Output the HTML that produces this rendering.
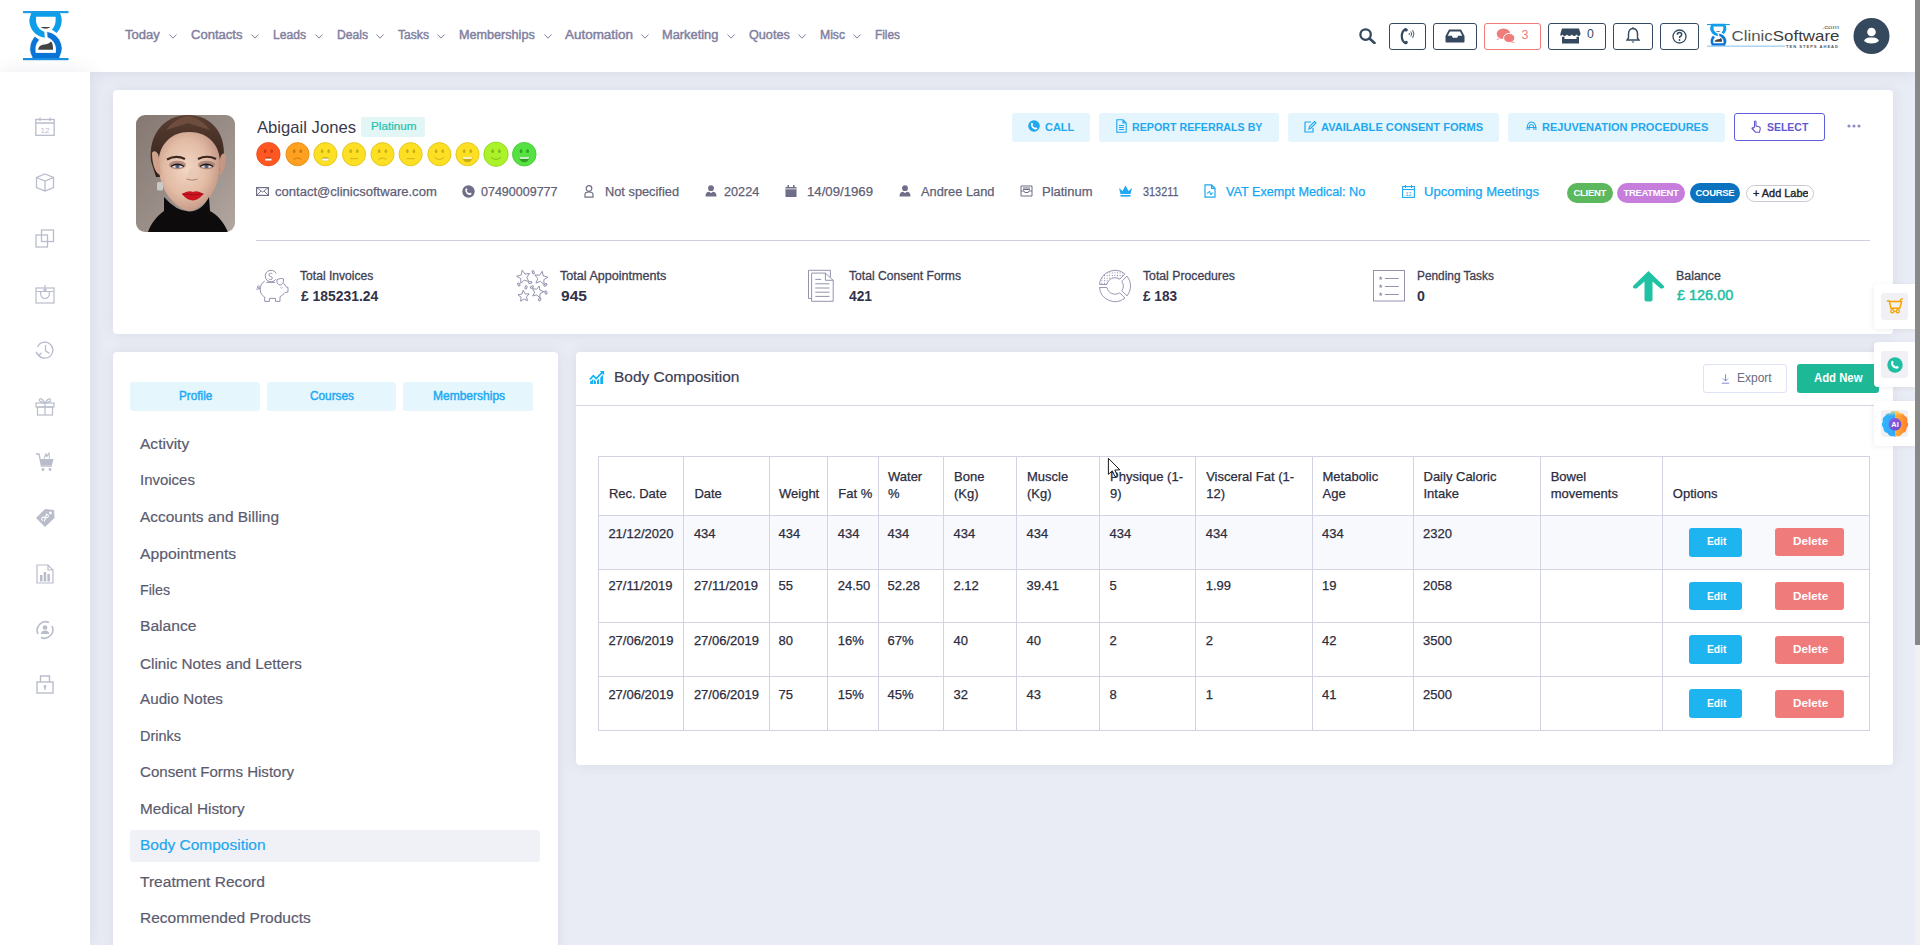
<!DOCTYPE html>
<html><head><meta charset="utf-8">
<style>
*{margin:0;padding:0;box-sizing:border-box;}
html,body{width:1920px;height:945px;overflow:hidden;}
body{background:#e9ecf4;font-family:"Liberation Sans",sans-serif;position:relative;color:#3b3b4f;}
.a{position:absolute;}
.t{position:absolute;white-space:pre;transform-origin:0 0;}
.bx{position:absolute;}
#hdr{position:absolute;left:0;top:0;width:1915px;height:72px;background:#fff;box-shadow:0 0 14px rgba(70,70,120,0.10);}
#side{position:absolute;left:0;top:72px;width:90px;height:873px;background:#fff;box-shadow:0 0 18px rgba(70,70,120,0.10);}
#sb{position:absolute;left:1915px;top:0;width:5px;height:945px;background:#f1f1f1;}
#sbt{position:absolute;left:1915px;top:0;width:5px;height:645px;background:#888;}
.card{position:absolute;background:#fff;border-radius:4px;box-shadow:0 0 14px rgba(70,70,120,0.09);}
.hb{position:absolute;top:23px;height:27px;border:1px solid #34495e;border-radius:3px;}
.ab{position:absolute;top:113px;height:29px;background:#e4f5fd;border-radius:3px;}
.tab{position:absolute;top:382px;height:29px;background:#e6f6fd;border-radius:3px;}
.hl{position:absolute;background:#d3d4e2;height:1px;}
.vl{position:absolute;background:#d3d4e2;width:1px;}
.pill{position:absolute;top:183px;height:20px;border-radius:10px;color:#fff;font-size:9.5px;font-weight:bold;line-height:20px;text-align:center;letter-spacing:-0.3px;}
.btn{position:absolute;height:29px;border-radius:3px;}
.wg{position:absolute;left:1874px;width:41px;height:45px;background:#fff;border-radius:4px 0 0 4px;box-shadow:-1px 1px 4px rgba(120,120,160,0.12);}
.wgi{position:absolute;left:7px;top:9px;width:27px;height:27px;background:#f1f1f5;border-radius:3px;}
.si{position:absolute;left:35px;width:20px;height:20px;}
</style></head>
<body>
<div id="hdr"></div>
<div id="side"></div>

<!-- cards -->
<div class="card" style="left:113px;top:90px;width:1780px;height:244px;"></div>
<div class="card" style="left:113px;top:352px;width:445px;height:620px;"></div>
<div class="card" style="left:576px;top:352px;width:1317px;height:413px;"></div>

<!-- logo -->
<svg class="a" style="left:23px;top:11px" width="46" height="50" viewBox="0 0 46 50">
  <path d="M8.8 -0.5 L36.4 -0.5 L36.6 1.5 C38 4 38.9 7 38.7 10 C38.5 15 36.5 19 33.6 22 L28.9 18.4 C31.5 15.5 32.8 12.5 32.6 9 L32.6 5.7 L13 5.7 L13 10 C13.5 15 16.5 19 21.3 20.7 L21.8 26.7 C13 25.5 7 19 6.3 10 C6.5 6.5 7.5 4 8.6 1.5 Z" fill="#0d9de9"/>
  <path d="M8.8 -0.5 L36.4 -0.5 L36.6 1.5 C38 4 38.9 7 38.7 10 C38.5 15 36.5 19 33.6 22 L28.9 18.4 C31.5 15.5 32.8 12.5 32.6 9 L32.6 5.7 L13 5.7 L13 10 C13.5 15 16.5 19 21.3 20.7 L21.8 26.7 C13 25.5 7 19 6.3 10 C6.5 6.5 7.5 4 8.6 1.5 Z" fill="#0a74d6" stroke="#fff" stroke-width="0.8" transform="rotate(180 22.75 23.6)"/>
  <rect x="0" y="0" width="45.5" height="2.2" fill="#1b9ce8"/>
  <rect x="0" y="47" width="45.5" height="2.2" fill="#1a8fe0"/>
  <path d="M17.4 15.9 Q22.5 19.5 27.6 15.9 Z" fill="#444"/>
  <path d="M15.2 38.8 C15.5 35 18 33.8 23 33.2 C26 32.8 27 31.5 27.8 30.5 C29.5 31.5 30.1 34.5 30.1 38.8 Z" fill="#444"/>
</svg>

<svg class="a" style="left:169.0px;top:34px" width="8" height="5" viewBox="0 0 8 5"><path d="M0.5 0.5 L4 4.2 L7.5 0.5" fill="none" stroke="#8280a0" stroke-width="1"/></svg>
<svg class="a" style="left:251.0px;top:34px" width="8" height="5" viewBox="0 0 8 5"><path d="M0.5 0.5 L4 4.2 L7.5 0.5" fill="none" stroke="#8280a0" stroke-width="1"/></svg>
<svg class="a" style="left:315.0px;top:34px" width="8" height="5" viewBox="0 0 8 5"><path d="M0.5 0.5 L4 4.2 L7.5 0.5" fill="none" stroke="#8280a0" stroke-width="1"/></svg>
<svg class="a" style="left:376.0px;top:34px" width="8" height="5" viewBox="0 0 8 5"><path d="M0.5 0.5 L4 4.2 L7.5 0.5" fill="none" stroke="#8280a0" stroke-width="1"/></svg>
<svg class="a" style="left:437.0px;top:34px" width="8" height="5" viewBox="0 0 8 5"><path d="M0.5 0.5 L4 4.2 L7.5 0.5" fill="none" stroke="#8280a0" stroke-width="1"/></svg>
<svg class="a" style="left:543.8px;top:34px" width="8" height="5" viewBox="0 0 8 5"><path d="M0.5 0.5 L4 4.2 L7.5 0.5" fill="none" stroke="#8280a0" stroke-width="1"/></svg>
<svg class="a" style="left:640.6px;top:34px" width="8" height="5" viewBox="0 0 8 5"><path d="M0.5 0.5 L4 4.2 L7.5 0.5" fill="none" stroke="#8280a0" stroke-width="1"/></svg>
<svg class="a" style="left:727.0px;top:34px" width="8" height="5" viewBox="0 0 8 5"><path d="M0.5 0.5 L4 4.2 L7.5 0.5" fill="none" stroke="#8280a0" stroke-width="1"/></svg>
<svg class="a" style="left:798.0px;top:34px" width="8" height="5" viewBox="0 0 8 5"><path d="M0.5 0.5 L4 4.2 L7.5 0.5" fill="none" stroke="#8280a0" stroke-width="1"/></svg>
<svg class="a" style="left:853.0px;top:34px" width="8" height="5" viewBox="0 0 8 5"><path d="M0.5 0.5 L4 4.2 L7.5 0.5" fill="none" stroke="#8280a0" stroke-width="1"/></svg>

<!-- header right -->
<svg class="a" style="left:1359px;top:28px" width="17" height="16" viewBox="0 0 17 16"><circle cx="6.6" cy="6.6" r="5.2" fill="none" stroke="#34495e" stroke-width="2.3"/><path d="M10.5 10.5 L15.5 15" stroke="#34495e" stroke-width="2.6" stroke-linecap="round"/></svg>
<div class="hb" style="left:1389px;width:37px;"></div>
<svg class="a" style="left:1400px;top:27px" width="16" height="18" viewBox="0 0 16 18"><path d="M5.5 2.2 Q1.8 4 1.8 9.2 Q1.8 14.2 5.5 16.2" fill="none" stroke="#34495e" stroke-width="2.2"/><ellipse cx="6" cy="2.8" rx="1.9" ry="1.6" fill="#34495e" transform="rotate(30 6 2.8)"/><ellipse cx="6" cy="15.6" rx="1.9" ry="1.6" fill="#34495e" transform="rotate(-30 6 15.6)"/><path d="M9 6 Q10 7 9 8 M10.8 4.5 Q12.5 7 10.8 9.5 M12.6 3 Q15.2 7 12.6 11" fill="none" stroke="#34495e" stroke-width="0.9"/></svg>
<div class="hb" style="left:1433px;width:44px;"></div>
<svg class="a" style="left:1445px;top:29px" width="20" height="14" viewBox="0 0 20 14"><path d="M4 0.5 L16 0.5 L19.5 7 L19.5 12.5 Q19.5 13.5 18.5 13.5 L1.5 13.5 Q0.5 13.5 0.5 12.5 L0.5 7 Z" fill="#34495e"/><path d="M5 2.5 L15 2.5 L17.3 6.8 L13.2 6.8 L12.2 8.8 L7.8 8.8 L6.8 6.8 L2.7 6.8 Z" fill="#fff"/></svg>
<div class="hb" style="left:1484px;width:57px;border-color:#f07c7c;"></div>
<svg class="a" style="left:1496px;top:28px" width="20" height="16" viewBox="0 0 20 16"><ellipse cx="7.5" cy="5.8" rx="6.8" ry="5.3" fill="#f07c7c"/><path d="M1.5 10.5 L0.5 12 L4 10.8 Z" fill="#f07c7c"/><ellipse cx="13.2" cy="10" rx="5.6" ry="4.6" fill="#f07c7c" stroke="#fff" stroke-width="1"/><path d="M17 13.5 L18.8 15 L15 14.3 Z" fill="#f07c7c"/></svg>
<div class="t" style="left:1521.5px;top:28.5px;font-size:12.5px;line-height:13px;color:#f07c7c;">3</div>
<div class="hb" style="left:1548px;width:58px;"></div>
<svg class="a" style="left:1560px;top:28px" width="21" height="16" viewBox="0 0 21 16"><path d="M2 0.5 L19 0.5 L20.5 5.5 Q20.5 8 18.7 8 Q17 8 16.6 6.6 Q16 8 14.2 8 Q12.4 8 11.8 6.6 Q11.2 8 9.4 8 Q7.6 8 7 6.6 Q6.4 8 4.6 8 Q2.8 8 2.3 6.6 Q1.8 8 0.5 7.5 Q0 6 0.5 5.5 Z" fill="#34495e"/><path d="M2 8.8 L4.5 8.8 L4.5 11 L16.5 11 L16.5 8.8 L19 8.8 L19 15.5 L2 15.5 Z" fill="#34495e"/></svg>
<div class="t" style="left:1587px;top:28.3px;font-size:12.3px;line-height:13px;color:#34495e;">0</div>
<div class="hb" style="left:1613px;width:40px;"></div>
<svg class="a" style="left:1626px;top:27px" width="14" height="18" viewBox="0 0 14 18"><path d="M7 1.5 C3.5 1.5 2.5 4.5 2.5 7.5 L2.5 11 L1 13 L13 13 L11.5 11 L11.5 7.5 C11.5 4.5 10.5 1.5 7 1.5 Z" fill="none" stroke="#34495e" stroke-width="1.4"/><circle cx="7" cy="1.2" r="1" fill="#34495e"/><path d="M5.5 14.5 L8.5 14.5 L7 16 Z" fill="#34495e"/></svg>
<div class="hb" style="left:1660px;width:39px;"></div>
<svg class="a" style="left:1672px;top:29px" width="15" height="15" viewBox="0 0 15 15"><circle cx="7.5" cy="7.5" r="6.5" fill="none" stroke="#34495e" stroke-width="1.3"/><path d="M5.3 5.8 Q5.3 3.5 7.5 3.5 Q9.7 3.5 9.7 5.5 Q9.7 6.8 8.2 7.5 Q7.5 7.9 7.5 9" fill="none" stroke="#34495e" stroke-width="1.5"/><circle cx="7.5" cy="11" r="0.9" fill="#34495e"/></svg>

<!-- ClinicSoftware logo -->
<svg class="a" style="left:1707px;top:23px" width="135" height="26" viewBox="0 0 135 26">
  <g transform="translate(0 1) scale(0.5 0.46)">
  <path d="M8.8 -0.5 L36.4 -0.5 L36.6 1.5 C38 4 38.9 7 38.7 10 C38.5 15 36.5 19 33.6 22 L28.9 18.4 C31.5 15.5 32.8 12.5 32.6 9 L32.6 5.7 L13 5.7 L13 10 C13.5 15 16.5 19 21.3 20.7 L21.8 26.7 C13 25.5 7 19 6.3 10 C6.5 6.5 7.5 4 8.6 1.5 Z" fill="#0d9de9"/>
  <path d="M8.8 -0.5 L36.4 -0.5 L36.6 1.5 C38 4 38.9 7 38.7 10 C38.5 15 36.5 19 33.6 22 L28.9 18.4 C31.5 15.5 32.8 12.5 32.6 9 L32.6 5.7 L13 5.7 L13 10 C13.5 15 16.5 19 21.3 20.7 L21.8 26.7 C13 25.5 7 19 6.3 10 C6.5 6.5 7.5 4 8.6 1.5 Z" fill="#0a74d6" stroke="#fff" stroke-width="1" transform="rotate(180 22.75 23.6)"/>
  <rect x="0" y="0" width="45.5" height="2.4" fill="#1b9ce8"/>
  <path d="M17.4 15.9 Q22.5 19.5 27.6 15.9 Z" fill="#444"/>
  <path d="M15.2 38.8 C15.5 35 18 33.8 23 33.2 C26 32.8 27 31.5 27.8 30.5 C29.5 31.5 30.1 34.5 30.1 38.8 Z" fill="#444"/>
  </g>
  <rect x="0" y="22.6" width="78" height="1.1" fill="#8fc3f0"/>
  <text x="24.5" y="17.7" font-family="Liberation Sans" font-size="14.5" fill="#555" textLength="108" lengthAdjust="spacingAndGlyphs">Clinic<tspan fill="#3a3a3a">Software</tspan></text>
  <text x="115" y="6" font-family="Liberation Sans" font-size="6" fill="#555" textLength="17" lengthAdjust="spacingAndGlyphs">.com</text>
  <text x="79" y="24.5" font-family="Liberation Sans" font-size="4.2" font-weight="bold" fill="#555" textLength="53" lengthAdjust="spacingAndGlyphs" letter-spacing="1">TEN STEPS AHEAD</text>
</svg>
<!-- avatar -->
<svg class="a" style="left:1853px;top:17px" width="37" height="38" viewBox="0 0 37 38"><circle cx="18.5" cy="19" r="18" fill="#34495e"/><circle cx="18.5" cy="15" r="4.3" fill="#fff"/><path d="M11 24 Q12.5 20.5 16.5 20.5 L20.5 20.5 Q24.5 20.5 26 24 Q23 26.5 18.5 26.5 Q14 26.5 11 24 Z" fill="#fff"/></svg>

<!-- sidebar icons -->
<svg class="si" style="top:117px;height:19px" viewBox="0 0 20 19"><rect x="0.8" y="2.5" width="18.4" height="15.8" fill="none" stroke="#b9bccb" stroke-width="1.3"/><path d="M0.8 6 L19.2 6 M5 0.5 L5 4 M15 0.5 L15 4" stroke="#b9bccb" stroke-width="1.3"/><text x="10" y="15.5" font-family="Liberation Sans" font-size="8" fill="#b9bccb" text-anchor="middle">12</text></svg>
<svg class="si" style="top:173px;height:19px" viewBox="0 0 20 19"><path d="M10 1 L18.5 4.5 L18.5 14.5 L10 18 L1.5 14.5 L1.5 4.5 Z M1.5 4.5 L10 8 L18.5 4.5 M10 8 L10 18" fill="none" stroke="#b9bccb" stroke-width="1.3"/></svg>
<svg class="si" style="top:229px;height:19px" viewBox="0 0 20 19"><rect x="1" y="6" width="11.5" height="12" fill="none" stroke="#b9bccb" stroke-width="1.3"/><rect x="6.5" y="1" width="12" height="11.5" fill="none" stroke="#b9bccb" stroke-width="1.3"/></svg>
<svg class="si" style="top:285px;height:19px" viewBox="0 0 20 19"><rect x="1" y="3" width="18" height="15" fill="none" stroke="#b9bccb" stroke-width="1.2"/><path d="M1 6.5 L19 6.5 M10 0 L10 6 M8.3 4.3 L10 6 L11.7 4.3 M5.5 7 Q5.5 13.5 10 13.5 Q14.5 13.5 14.5 7" fill="none" stroke="#b9bccb" stroke-width="1.2"/></svg>
<svg class="si" style="top:341px;height:19px" viewBox="0 0 20 19"><path d="M2.5 6 A8 8 0 1 1 3.5 14" fill="none" stroke="#b9bccb" stroke-width="1.3"/><path d="M10.5 4 L10.5 9.8 L14.5 12.5" fill="none" stroke="#b9bccb" stroke-width="1.3"/><path d="M1 11 L3.5 14.5 L6.5 12" fill="none" stroke="#b9bccb" stroke-width="1.3"/></svg>
<svg class="si" style="top:397px;height:19px" viewBox="0 0 20 19"><rect x="1" y="6" width="18" height="4" fill="none" stroke="#b9bccb" stroke-width="1.2"/><rect x="2.5" y="10" width="15" height="8" fill="none" stroke="#b9bccb" stroke-width="1.2"/><path d="M10 6 L10 18 M10 6 Q6 0 4.5 2.5 Q3.5 5 10 6 Q14 0 15.5 2.5 Q16.5 5 10 6" fill="none" stroke="#b9bccb" stroke-width="1.2"/></svg>
<svg class="si" style="top:452px;height:20px" viewBox="0 0 20 20"><path d="M1 2 L4 2 L6.5 14 L17 14" fill="none" stroke="#b9bccb" stroke-width="1.3"/><path d="M5.5 7 L18.5 7 L17 13 L6.5 13 Z" fill="#b9bccb"/><circle cx="8" cy="17.5" r="1.4" fill="#b9bccb"/><circle cx="15" cy="17.5" r="1.4" fill="#b9bccb"/><path d="M9 6.5 L11 2 L12 4.5 L14 1 L14.5 6.5" fill="none" stroke="#b9bccb" stroke-width="1.1"/></svg>
<svg class="si" style="top:508px;height:20px" viewBox="0 0 20 20"><path d="M10 1 L19 2 L19.5 10 L10 19 L1 10 Z" fill="#b9bccb"/><circle cx="15.5" cy="5" r="1.4" fill="#fff"/><path d="M8 12.5 Q6 12 7 10 Q8 8.5 10 9.5 Q12 10.5 13 9 Q14 7 12 6.5 M9.3 13.5 L11.7 5.5" fill="none" stroke="#fff" stroke-width="1.1"/></svg>
<svg class="si" style="top:564px;height:20px" viewBox="0 0 20 20"><path d="M2 1 L13 1 L18 6 L18 19 L2 19 Z M13 1 L13 6 L18 6" fill="none" stroke="#b9bccb" stroke-width="1.2"/><rect x="5" y="11" width="2.5" height="6.5" fill="#b9bccb"/><rect x="8.7" y="8" width="2.5" height="9.5" fill="#b9bccb"/><rect x="12.4" y="10" width="2.5" height="7.5" fill="#b9bccb"/></svg>
<svg class="si" style="top:620px;height:20px" viewBox="0 0 20 20"><path d="M3 14 A8.5 8.5 0 0 1 14 2.5 M17 6 A8.5 8.5 0 0 1 6 17.5" fill="none" stroke="#b9bccb" stroke-width="1.6"/><circle cx="10" cy="7.5" r="2.3" fill="#b9bccb"/><path d="M5.8 14 Q6 10.5 10 10.5 Q14 10.5 14.2 14 Z" fill="#b9bccb"/></svg>
<svg class="si" style="top:674px;height:20px" viewBox="0 0 20 20"><rect x="2" y="8" width="16" height="11" fill="none" stroke="#b9bccb" stroke-width="1.4"/><path d="M5.5 8 L5.5 2 L14.5 2 L14.5 8" fill="none" stroke="#b9bccb" stroke-width="1.4"/><circle cx="10" cy="12.5" r="1.4" fill="#b9bccb"/><rect x="9.3" y="12.5" width="1.4" height="3.5" fill="#b9bccb"/></svg>

<!-- profile photo -->
<svg class="a" style="left:136px;top:115px" width="99" height="117" viewBox="0 0 99 117">
  <defs>
    <clipPath id="pc"><rect x="0" y="0" width="99" height="117" rx="9" ry="9"/></clipPath>
    <linearGradient id="bg1" x1="0" y1="0" x2="1" y2="1"><stop offset="0" stop-color="#857872"/><stop offset="0.55" stop-color="#9b8f89"/><stop offset="1" stop-color="#b3a8a1"/></linearGradient>
    <radialGradient id="face" cx="0.45" cy="0.45" r="0.65"><stop offset="0" stop-color="#f2d6c4"/><stop offset="0.55" stop-color="#e2bba4"/><stop offset="1" stop-color="#b8897a"/></radialGradient>
    <linearGradient id="hair" x1="0" y1="0" x2="0" y2="1"><stop offset="0" stop-color="#5a3e32"/><stop offset="1" stop-color="#2e1f19"/></linearGradient>
  </defs>
  <g clip-path="url(#pc)">
    <rect width="99" height="117" fill="url(#bg1)"/>
    <path d="M15 46 C12 20 28 0 52 0 C76 0 92 20 87 48 L82 62 L20 62 Z" fill="url(#hair)"/>
    <path d="M52 1 C44 2 36 7 30 15 L52 8 L74 15 C68 7 60 2 52 1 Z" fill="#6e4d3e"/>
    <path d="M22.5 48 C22.5 30 35 17 53 17 C72 17 84 30 84 48 C84 70 74 90 53 96.5 C33 90 22.5 70 22.5 48 Z" fill="url(#face)"/>
    <path d="M16 38 C18 34 23 37 23 44 L25 60 C20 60 16 50 16 38 Z" fill="#cfa28c"/>
    <path d="M84 44 C85 38 89 37 90 41 C90 52 86 60 83 60 Z" fill="#c49683"/>
    <ellipse cx="41.5" cy="50" rx="8.5" ry="4.2" fill="#9b7466" opacity="0.7"/>
    <ellipse cx="70.5" cy="50" rx="8.5" ry="4.2" fill="#9b7466" opacity="0.7"/>
    <path d="M31 44.5 Q40 39.5 49 44 M62 44 Q71 39.5 80 44" stroke="#3a2820" stroke-width="2.2" fill="none"/>
    <path d="M35 51.5 Q41.5 47.5 48 51.5 Q41.5 54 35 51.5 Z" fill="#e9e4e6"/>
    <path d="M64 51.5 Q70.5 47.5 77 51.5 Q70.5 54 64 51.5 Z" fill="#e9e4e6"/>
    <circle cx="41.5" cy="51" r="2.2" fill="#4f5f78"/>
    <circle cx="70.5" cy="51" r="2.2" fill="#4f5f78"/>
    <path d="M35 51.5 Q41.5 47 48 51.5 M64 51.5 Q70.5 47 77 51.5" stroke="#1e1618" stroke-width="1.3" fill="none"/>
    <path d="M54 54 L51 63.5 Q56 66 61 63.5 L57 55 Z" fill="#e9c9b6"/>
    <path d="M50.5 64 Q56 66.5 61.5 64" stroke="#a87868" stroke-width="0.9" fill="none"/>
    <path d="M46 79 Q52 75 57 77 Q62 75 67.5 79 Q62 85.5 57 85.5 Q51 85.5 46 79 Z" fill="#cc1420"/>
    <path d="M46 79 Q56.5 80.5 67.5 79" stroke="#8a0d14" stroke-width="0.7" fill="none"/>
    <rect x="21" y="67" width="6" height="8.5" fill="#c9c9c9" rx="1.5"/>
    <rect x="82" y="68" width="3" height="5" fill="#9a9a9a" rx="1"/>
    <path d="M12 117 C15 108 22 100 28 96 L28 82 Q40 96 53 96.5 Q66 96 73 82 L74 96 C82 100 88 108 92 117 Z" fill="#0d0b0c"/>
  </g>
</svg>

<!-- name badge -->
<div class="bx" style="left:361px;top:117px;width:64px;height:20px;background:#e2f6f5;border-radius:2px;"></div>
<div class="t" style="left:371px;top:120.3px;font-size:11.5px;line-height:12px;color:#1ec2ae;transform:scaleX(1.02);-webkit-text-stroke:0.2px #1ec2ae;">Platinum</div>

<!-- emojis -->
<svg class="a" style="left:254px;top:140px" width="286" height="28" viewBox="0 0 286 28">
  <defs>
    <linearGradient id="eg" x1="0" y1="0" x2="0" y2="1"><stop offset="0" stop-color="#fff" stop-opacity="0.18"/><stop offset="1" stop-color="#000" stop-opacity="0.06"/></linearGradient>
  </defs>
  <g transform="translate(14.4 14.2)"><circle r="11.7" fill="#ff5722" stroke="#e5481a" stroke-width="0.8"/><ellipse cx="-3.3" cy="-3" rx="1.3" ry="1.9" fill="#c63d12"/><ellipse cx="3.3" cy="-3" rx="1.3" ry="1.9" fill="#c63d12"/><path d="M-3.5 4 Q0 1.5 3.5 4 L3.5 6.5 L-3.5 6.5 Z" fill="#c63d12"/><rect x="-3.2" y="4.4" width="6.4" height="2" fill="#fff"/></g>
  <g transform="translate(43.5 14.2)"><circle r="11.6" fill="#ffa020" stroke="#e08a15" stroke-width="0.8"/><ellipse cx="-3.3" cy="-3" rx="1.3" ry="1.9" fill="#c77a10"/><ellipse cx="3.3" cy="-3" rx="1.3" ry="1.9" fill="#c77a10"/><path d="M-4 5 Q0 2.5 4 5" fill="none" stroke="#c77a10" stroke-width="0.9"/></g>
  <g transform="translate(71.4 14.2)"><circle r="11.6" fill="#fde024" stroke="#dcc21a" stroke-width="0.8"/><ellipse cx="-3.3" cy="-3" rx="1.3" ry="1.9" fill="#c9ae12"/><ellipse cx="3.3" cy="-3" rx="1.3" ry="1.9" fill="#c9ae12"/><path d="M-3.5 4 Q0 1.5 3.5 4 L3.5 6.5 L-3.5 6.5 Z" fill="#c9ae12"/><rect x="-3.2" y="4.4" width="6.4" height="2" fill="#fff"/></g>
  <g transform="translate(100 14.2)"><circle r="11.6" fill="#fde024" stroke="#dcc21a" stroke-width="0.8"/><ellipse cx="-3.3" cy="-3" rx="1.3" ry="1.9" fill="#c9ae12"/><ellipse cx="3.3" cy="-3" rx="1.3" ry="1.9" fill="#c9ae12"/><path d="M-4 4.5 L4 4.5" fill="none" stroke="#c9ae12" stroke-width="0.9"/></g>
  <g transform="translate(128.5 14.2)"><circle r="11.6" fill="#fde024" stroke="#dcc21a" stroke-width="0.8"/><ellipse cx="-3.3" cy="-3" rx="1.3" ry="1.9" fill="#c9ae12"/><ellipse cx="3.3" cy="-3" rx="1.3" ry="1.9" fill="#c9ae12"/><path d="M-4 5 Q0 2.5 4 5" fill="none" stroke="#c9ae12" stroke-width="0.9"/></g>
  <g transform="translate(156.6 14.2)"><circle r="11.6" fill="#fde024" stroke="#dcc21a" stroke-width="0.8"/><ellipse cx="-3.3" cy="-3" rx="1.3" ry="1.9" fill="#c9ae12"/><ellipse cx="3.3" cy="-3" rx="1.3" ry="1.9" fill="#c9ae12"/><path d="M-4 4.5 L4 4.5" fill="none" stroke="#c9ae12" stroke-width="0.9"/></g>
  <g transform="translate(185.4 14.2)"><circle r="11.6" fill="#fde024" stroke="#dcc21a" stroke-width="0.8"/><ellipse cx="-3.3" cy="-3" rx="1.3" ry="1.9" fill="#c9ae12"/><ellipse cx="3.3" cy="-3" rx="1.3" ry="1.9" fill="#c9ae12"/><path d="M-5 3 Q0 7.5 5 3" fill="none" stroke="#c9ae12" stroke-width="0.9"/></g>
  <g transform="translate(213.5 14.2)"><circle r="11.6" fill="#fde024" stroke="#dcc21a" stroke-width="0.8"/><ellipse cx="-3.3" cy="-3" rx="1.3" ry="1.9" fill="#c9ae12"/><ellipse cx="3.3" cy="-3" rx="1.3" ry="1.9" fill="#c9ae12"/><path d="M-5.5 3 L5.5 3 Q4 8 0 8 Q-4 8 -5.5 3 Z" fill="#c9ae12"/><path d="M-5 3 L5 3 L4.3 4.6 L-4.3 4.6 Z" fill="#fff"/></g>
  <g transform="translate(242 14.2)"><circle r="12.2" fill="#abf22a" stroke="#8fd21a" stroke-width="0.8"/><ellipse cx="-3.3" cy="-3" rx="1.3" ry="1.9" fill="#7fb815"/><ellipse cx="3.3" cy="-3" rx="1.3" ry="1.9" fill="#7fb815"/><path d="M-5 3 Q0 7.5 5 3" fill="none" stroke="#7fb815" stroke-width="0.9"/></g>
  <g transform="translate(270.3 14.2)"><circle r="11.8" fill="#56e143" stroke="#3fc52f" stroke-width="0.8"/><ellipse cx="-3.3" cy="-3" rx="1.3" ry="1.9" fill="#2f9e22"/><ellipse cx="3.3" cy="-3" rx="1.3" ry="1.9" fill="#2f9e22"/><path d="M-5.5 3 L5.5 3 Q4 8 0 8 Q-4 8 -5.5 3 Z" fill="#2f9e22"/><path d="M-5 3 L5 3 L4.3 4.6 L-4.3 4.6 Z" fill="#fff"/></g>
</svg>

<!-- contact row icons -->
<svg class="a" style="left:256px;top:187px" width="13" height="9" viewBox="0 0 13 9"><rect x="0.6" y="0.6" width="11.8" height="7.8" fill="none" stroke="#6e6e88" stroke-width="1.2"/><path d="M0.6 0.6 L6.5 5 L12.4 0.6 M0.6 8.4 L5 4 M12.4 8.4 L8 4" fill="none" stroke="#6e6e88" stroke-width="0.9"/></svg>
<svg class="a" style="left:462px;top:185px" width="13" height="13" viewBox="0 0 13 13"><circle cx="6.5" cy="6.5" r="6.2" fill="#6e6e88"/><path d="M4.2 3 Q3 4 3.3 6 Q4 9 7 10 Q8.8 10.3 9.8 9 L8.4 7.6 L7.2 8.2 Q5.2 7.2 4.7 5.7 L5.6 4.6 Z" fill="#fff"/></svg>
<svg class="a" style="left:584px;top:185px" width="10" height="13" viewBox="0 0 10 13"><circle cx="5" cy="3.5" r="2.8" fill="none" stroke="#6e6e88" stroke-width="1.2"/><path d="M1 12.2 L1 9.5 Q1 7 5 7 Q9 7 9 9.5 L9 12.2 Z" fill="none" stroke="#6e6e88" stroke-width="1.2"/></svg>
<svg class="a" style="left:705px;top:185px" width="12" height="12" viewBox="0 0 12 12"><circle cx="6" cy="3.2" r="2.9" fill="#6e6e88"/><path d="M0.5 11.5 Q0.5 7 4 6.8 L6 8 L8 6.8 Q11.5 7 11.5 11.5 Z" fill="#6e6e88"/></svg>
<svg class="a" style="left:785px;top:185px" width="12" height="12" viewBox="0 0 12 12"><rect x="0.5" y="2" width="11" height="10" fill="#6e6e88"/><rect x="2.5" y="0" width="1.5" height="2.5" fill="#6e6e88"/><rect x="8" y="0" width="1.5" height="2.5" fill="#6e6e88"/><rect x="0.5" y="3.5" width="11" height="0.8" fill="#fff"/></svg>
<svg class="a" style="left:899px;top:185px" width="12" height="12" viewBox="0 0 12 12"><circle cx="6" cy="3.2" r="2.9" fill="#6e6e88"/><path d="M0.5 11.5 Q0.5 7 4 6.8 L6 8 L8 6.8 Q11.5 7 11.5 11.5 Z" fill="#6e6e88"/></svg>
<svg class="a" style="left:1020px;top:185px" width="13" height="12" viewBox="0 0 13 12"><path d="M1 1 L12 1 L12 11 L1 11 Z M1 6 L4 6 L4.8 7.5 L8.2 7.5 L9 6 L12 6 M3 3 L10 3 M3 4.5 L10 4.5" fill="none" stroke="#6e6e88" stroke-width="1"/></svg>
<svg class="a" style="left:1118px;top:185px" width="15" height="12" viewBox="0 0 15 12"><path d="M1 3 L4.5 6 L7.5 0.5 L10.5 6 L14 3 L12.5 9 L2.5 9 Z" fill="#1ea9f0"/><rect x="2.5" y="10" width="10" height="1.6" fill="#1ea9f0"/></svg>
<svg class="a" style="left:1204px;top:184px" width="12" height="14" viewBox="0 0 12 14"><path d="M1 0.8 L7.5 0.8 L11 4.3 L11 13.2 L1 13.2 Z M7.5 0.8 L7.5 4.3 L11 4.3" fill="none" stroke="#1ea9f0" stroke-width="1.2"/><path d="M2.8 9 L4.5 9 L5.5 7 L6.8 11 L7.8 9 L9.2 9" fill="none" stroke="#1ea9f0" stroke-width="1"/></svg>
<svg class="a" style="left:1402px;top:185px" width="13" height="13" viewBox="0 0 13 13"><rect x="0.6" y="1.6" width="11.8" height="10.8" fill="none" stroke="#1ea9f0" stroke-width="1.1"/><path d="M0.6 4.5 L12.4 4.5 M3.5 0 L3.5 3 M9.5 0 L9.5 3" stroke="#1ea9f0" stroke-width="1.1"/><text x="6.5" y="10.8" font-family="Liberation Sans" font-size="5.5" fill="#1ea9f0" text-anchor="middle">12</text></svg>

<!-- labels -->
<div class="pill" style="left:1566.5px;width:46.5px;background:#5cb85c;">CLIENT</div>
<div class="pill" style="left:1617px;width:68px;background:#c77ddb;">TREATMENT</div>
<div class="pill" style="left:1690px;width:50px;background:#0b72c0;">COURSE</div>
<div class="bx" style="left:1746px;top:184.5px;width:68px;height:17.5px;border:1px solid #c9c9d3;border-radius:9px;"></div>
<div class="bx" style="left:1750px;top:185px;width:57.5px;height:16px;overflow:hidden;">
  <div class="t" style="left:3px;top:2.6px;font-size:10.5px;line-height:11px;color:#1d1d2a;transform:scaleX(1.04);-webkit-text-stroke:0.35px #1d1d2a;">+ Add Label</div>
</div>

<!-- action buttons -->
<div class="ab" style="left:1012px;width:78px;"></div>
<div class="ab" style="left:1099px;width:180px;"></div>
<div class="ab" style="left:1288px;width:211px;"></div>
<div class="ab" style="left:1508px;width:217px;"></div>
<div class="bx" style="left:1734px;top:113px;width:91px;height:28px;border:1px solid #5d5fd8;border-radius:3px;"></div>
<svg class="a" style="left:1028px;top:120px" width="12" height="12" viewBox="0 0 12 12"><circle cx="6" cy="6" r="5.8" fill="#1fa8ee"/><path d="M3.9 2.6 Q2.6 3.6 3 5.8 Q3.8 8.7 6.8 9.5 Q8.6 9.8 9.5 8.5 L8.1 7.2 L7 7.8 Q5 6.8 4.5 5.3 L5.3 4.2 Z" fill="#fff"/></svg>
<svg class="a" style="left:1116px;top:119px" width="11" height="14" viewBox="0 0 11 14"><path d="M0.8 0.8 L7 0.8 L10.2 4 L10.2 13.2 L0.8 13.2 Z M7 0.8 L7 4 L10.2 4 M3 6.5 L8 6.5 M3 8.5 L8 8.5 M3 10.5 L8 10.5" fill="none" stroke="#1fa8ee" stroke-width="1.1"/></svg>
<svg class="a" style="left:1304px;top:120px" width="13" height="13" viewBox="0 0 13 13"><path d="M1 2 L7 2 M1 2 L1 12 L9 12 L9 8" fill="none" stroke="#1fa8ee" stroke-width="1.2"/><path d="M5 9 L5.5 6.5 L10.5 1.5 L12 3 L7 8 Z" fill="none" stroke="#1fa8ee" stroke-width="1.1"/></svg>
<svg class="a" style="left:1526px;top:121px" width="11" height="10" viewBox="0 0 11 10"><path d="M1 9 Q1 1 5.5 1 Q10 1 10 9 M3 9 Q3 3.5 5.5 3.5 Q8 3.5 8 9 M0.5 6.5 L10.5 6.5" fill="none" stroke="#1fa8ee" stroke-width="1.1"/></svg>
<svg class="a" style="left:1751px;top:120px" width="10" height="13" viewBox="0 0 10 13"><path d="M3.5 7 L3.5 1.5 Q4.3 0.5 5 1.5 L5 6 L8 6.8 Q9.5 7.3 9.2 9 L8.5 12.2 L4.5 12.2 L1 8.5 Q1.3 7.5 2.5 8 Z" fill="none" stroke="#6158cf" stroke-width="1.1"/></svg>
<svg class="a" style="left:1847px;top:124px" width="14" height="4" viewBox="0 0 14 4"><circle cx="2" cy="2" r="1.6" fill="#8d8dc8"/><circle cx="7" cy="2" r="1.6" fill="#8d8dc8"/><circle cx="12" cy="2" r="1.6" fill="#8d8dc8"/></svg>

<!-- divider -->
<div class="hl" style="left:256px;top:240px;width:1614px;background:#cfd0de;"></div>

<!-- stat icons -->
<svg class="a" style="left:256px;top:269px" width="34" height="34" viewBox="0 0 34 34"><g fill="none" stroke="#8d8dab" stroke-width="0.95" stroke-linejoin="round"><path d="M20.3 4.6 A5.8 5.8 0 1 0 19.9 10.2"/><path d="M16.3 5.2 Q15.8 4.2 14.6 4.2 Q13 4.2 13 5.7 Q13 7.2 14.6 7.4 Q16.3 7.7 16.3 9.1 Q16.3 10.6 14.6 10.6 Q13.2 10.6 12.8 9.6"/><path d="M10.4 13.4 L19 13.4"/><path d="M8.7 12.2 C5.5 13.8 4.2 17 4.2 21 C4.2 24 6 26.5 8.7 28 L8.7 32.4 L13.4 32.4 L13.4 29.4 L19.5 29.4 L19.5 32.4 L24 32.4 L24 27.7 C26 26.5 28 25 29 23.5 L32 23 L32 18.4 L30 17.8 C29.3 16.5 28.5 15.3 27.5 14.2"/><path d="M21 10.8 C20.5 13.5 21.5 15.8 24 16 C26.5 16 27.6 14 27.5 10 C26 9 23.5 9.5 21 10.8 Z"/><path d="M0.3 20.3 L4.2 19.5"/><circle cx="2.4" cy="18" r="1"/><path d="M24.8 18.4 L25.6 19.3 L26.5 18.4"/></g></svg>
<svg class="a" style="left:516px;top:269px" width="34" height="34" viewBox="0 0 34 34"><g fill="none" stroke="#8d8dab" stroke-width="0.95" stroke-linejoin="round"><path d="M6.14 1.15 L8.90 5.08 L13.66 4.50 L10.78 8.33 L12.80 12.68 L8.27 11.13 L4.75 14.39 L4.83 9.60 L0.64 7.27 L5.22 5.86 Z"/><path d="M26.22 2.31 L27.30 6.98 L31.93 8.23 L27.83 10.70 L28.07 15.49 L24.44 12.35 L19.96 14.06 L21.83 9.65 L18.82 5.91 L23.60 6.32 Z"/><path d="M7.19 21.32 L9.14 24.80 L13.13 24.89 L10.43 27.83 L11.57 31.65 L7.94 29.99 L4.66 32.26 L5.12 28.29 L1.95 25.87 L5.86 25.09 Z"/><path d="M23.23 16.91 L23.85 21.17 L27.89 22.67 L24.03 24.58 L23.86 28.88 L20.85 25.80 L16.70 26.96 L18.70 23.15 L16.32 19.57 L20.56 20.29 Z"/><rect x="16.3" y="1.6" width="1.8" height="3.2" rx="0.9" transform="rotate(-25 17.2 3.2)"/><rect x="13.3" y="11.8" width="1.8" height="3.2" rx="0.9" transform="rotate(80 14.2 13.4)"/><rect x="1.9" y="13.9" width="1.8" height="3.2" rx="0.9" transform="rotate(-30 2.8 15.5)"/><rect x="9.1" y="16.8" width="1.8" height="3.2" rx="0.9" transform="rotate(20 10 18.4)"/><rect x="15.0" y="16.4" width="1.8" height="3.2" rx="0.9" transform="rotate(60 15.9 18)"/><rect x="28.5" y="14.3" width="1.8" height="3.2" rx="0.9" transform="rotate(55 29.4 15.9)"/><rect x="29.0" y="21.9" width="1.8" height="3.2" rx="0.9" transform="rotate(-25 29.9 23.5)"/><rect x="22.8" y="28.7" width="1.8" height="3.2" rx="0.9" transform="rotate(25 23.7 30.3)"/></g></svg>
<svg class="a" style="left:808px;top:269px" width="27" height="34" viewBox="0 0 27 34"><g fill="none" stroke="#8d8dab" stroke-width="0.95"><path d="M3.5 29.5 L0.5 29.5 L0.5 1.3 L22.4 1.3 L22.4 8"/><path d="M3.6 4.1 L17.4 4.1 L25.2 11.3 L25.2 32.3 L3.6 32.3 Z M17.4 4.1 L17.4 11.3 L25.2 11.3"/><path d="M7.3 10.4 L13.1 10.4 M7.3 14.8 L21.5 14.8 M7.3 19 L21.5 19 M7.3 23.2 L21.5 23.2 M7.3 27.4 L21.5 27.4"/></g></svg>
<svg class="a" style="left:1098px;top:269px" width="35" height="35" viewBox="0 0 35 35"><defs><pattern id="dots" width="2.6" height="2.6" patternUnits="userSpaceOnUse"><circle cx="1.3" cy="1.3" r="0.55" fill="#8d8dab"/></pattern></defs><path d="M1.47 15.50 A15.6 15.6 0 0 1 26.92 4.96 L21.65 10.24 A8.2 8.2 0 0 0 8.94 15.51 Z" fill="url(#dots)" stroke="#8d8dab" stroke-width="0.9"/><path d="M29.04 7.08 A15.6 15.6 0 0 1 29.04 26.92 L23.76 21.65 A8.2 8.2 0 0 0 23.76 12.35 Z" fill="none" stroke="#8d8dab" stroke-width="0.9"/><path d="M26.92 29.04 A15.6 15.6 0 0 1 1.47 18.50 L8.94 18.49 A8.2 8.2 0 0 0 21.65 23.76 Z" fill="none" stroke="#8d8dab" stroke-width="0.9"/></svg>
<svg class="a" style="left:1372px;top:270px" width="34" height="33" viewBox="0 0 34 33"><g fill="none" stroke="#8d8dab" stroke-width="0.95"><rect x="1.5" y="0.5" width="31" height="30.5"/><path d="M12.9 8.5 L26.8 8.5 M12.9 16.5 L26.8 16.5 M12.9 24.5 L26.8 24.5"/></g><g fill="#8d8dab"><path d="M8.70 6.10 L9.26 7.43 L10.70 7.55 L9.60 8.49 L9.93 9.90 L8.70 9.15 L7.47 9.90 L7.80 8.49 L6.70 7.55 L8.14 7.43 Z"/><path d="M8.70 14.10 L9.26 15.43 L10.70 15.55 L9.60 16.49 L9.93 17.90 L8.70 17.15 L7.47 17.90 L7.80 16.49 L6.70 15.55 L8.14 15.43 Z"/><path d="M8.70 22.10 L9.26 23.43 L10.70 23.55 L9.60 24.49 L9.93 25.90 L8.70 25.15 L7.47 25.90 L7.80 24.49 L6.70 23.55 L8.14 23.43 Z"/></g></svg>
<svg class="a" style="left:1632px;top:270px" width="33" height="32" viewBox="0 0 33 32"><path d="M16.5 1 L32 16 Q32.5 18 30.5 18.5 L28.5 18.5 L20.5 11.5 L20.5 29.5 Q20.5 31.5 18.5 31.5 L14.5 31.5 Q12.5 31.5 12.5 29.5 L12.5 11.5 L4.5 18.5 L2.5 18.5 Q0.5 18 1 16 Z" fill="#1fc2a2"/></svg>

<!-- left card tabs -->
<div class="tab" style="left:130px;width:130px;"></div>
<div class="tab" style="left:267px;width:129px;"></div>
<div class="tab" style="left:403px;width:130px;"></div>
<div class="bx" style="left:130px;top:830px;width:410px;height:32px;background:#eff1f7;border-radius:3px;"></div>

<!-- body comp card -->
<svg class="a" style="left:589px;top:370px" width="16" height="15" viewBox="0 0 16 15"><g fill="#12b1f5"><path d="M1.2 11.2 L4 8.6 L4 13.9 L1.2 13.9 Z"/><path d="M4.6 8.4 L6.9 10.4 L6.9 13.9 L4.6 13.9 Z"/><path d="M8 10 L10 8 L10 13.9 L8 13.9 Z"/><path d="M11.3 6.7 L14 4 L14 13.9 L11.3 13.9 Z"/></g><path d="M0.8 10 L4.3 6.2 L7.2 9 L14 2.2" fill="none" stroke="#fff" stroke-width="3.4"/><path d="M0.8 9.5 L4.3 5.7 L7.2 8.5 L13.5 2.2" fill="none" stroke="#12b1f5" stroke-width="1.7"/><path d="M10.8 1 L15.1 1 L15.1 5.2 Z" fill="#12b1f5"/></svg>
<div class="hl" style="left:576px;top:405px;width:1317px;background:#d5d6e3;"></div>
<div class="bx" style="left:1703px;top:364px;width:84px;height:29px;border:1px solid #dde2f5;border-radius:3px;background:#fff;"></div>
<svg class="a" style="left:1721px;top:374px" width="9" height="10" viewBox="0 0 9 10"><path d="M4.5 0.3 L4.5 7 M2 4.5 L4.5 7 L7 4.5 M0.8 9.2 L8.2 9.2" fill="none" stroke="#7b7bd0" stroke-width="0.9"/></svg>
<div class="bx" style="left:1797px;top:364px;width:82px;height:29px;background:#1db996;border-radius:3px;"></div>

<!-- table -->
<div class="bx" style="left:598px;top:515px;width:1271px;height:54px;background:#f8f9fc;"></div>
<div class="hl" style="left:598px;top:456px;width:1272px;"></div>
<div class="hl" style="left:598px;top:515px;width:1272px;"></div>
<div class="hl" style="left:598px;top:569px;width:1272px;"></div>
<div class="hl" style="left:598px;top:622px;width:1272px;"></div>
<div class="hl" style="left:598px;top:676px;width:1272px;"></div>
<div class="hl" style="left:598px;top:730px;width:1272px;"></div>
<div class="vl" style="left:598px;top:456px;height:275px;"></div>
<div class="vl" style="left:683px;top:456px;height:275px;"></div>
<div class="vl" style="left:769px;top:456px;height:275px;"></div>
<div class="vl" style="left:827px;top:456px;height:275px;"></div>
<div class="vl" style="left:878px;top:456px;height:275px;"></div>
<div class="vl" style="left:943px;top:456px;height:275px;"></div>
<div class="vl" style="left:1016px;top:456px;height:275px;"></div>
<div class="vl" style="left:1099px;top:456px;height:275px;"></div>
<div class="vl" style="left:1195px;top:456px;height:275px;"></div>
<div class="vl" style="left:1312px;top:456px;height:275px;"></div>
<div class="vl" style="left:1413px;top:456px;height:275px;"></div>
<div class="vl" style="left:1540px;top:456px;height:275px;"></div>
<div class="vl" style="left:1662px;top:456px;height:275px;"></div>
<div class="vl" style="left:1869px;top:456px;height:275px;"></div>

<div class="btn" style="left:1689px;top:528px;width:53px;background:#1eb4f0;"></div>
<div class="btn" style="left:1775px;top:528px;width:69px;height:28px;background:#f07b7b;"></div>
<div class="btn" style="left:1689px;top:582px;width:53px;height:28px;background:#1eb4f0;"></div>
<div class="btn" style="left:1775px;top:582px;width:69px;height:28px;background:#f07b7b;"></div>
<div class="btn" style="left:1689px;top:635px;width:53px;height:28.5px;background:#1eb4f0;"></div>
<div class="btn" style="left:1775px;top:636px;width:69px;height:28px;background:#f07b7b;"></div>
<div class="btn" style="left:1689px;top:689px;width:53px;height:29px;background:#1eb4f0;"></div>
<div class="btn" style="left:1775px;top:690px;width:69px;height:28px;background:#f07b7b;"></div>

<div class="t" style="left:125.20px;top:29.32px;font-size:12.5px;line-height:12.5px;font-weight:400;color:#8280a0;transform:scaleX(1.0432);-webkit-text-stroke:0.45px #8280a0;">Today</div>
<div class="t" style="left:190.50px;top:29.32px;font-size:12.5px;line-height:12.5px;font-weight:400;color:#8280a0;transform:scaleX(1.0437);-webkit-text-stroke:0.45px #8280a0;">Contacts</div>
<div class="t" style="left:273.00px;top:29.32px;font-size:12.5px;line-height:12.5px;font-weight:400;color:#8280a0;transform:scaleX(0.9688);-webkit-text-stroke:0.45px #8280a0;">Leads</div>
<div class="t" style="left:337.00px;top:29.32px;font-size:12.5px;line-height:12.5px;font-weight:400;color:#8280a0;transform:scaleX(0.9697);-webkit-text-stroke:0.45px #8280a0;">Deals</div>
<div class="t" style="left:398.00px;top:29.32px;font-size:12.5px;line-height:12.5px;font-weight:400;color:#8280a0;transform:scaleX(0.9702);-webkit-text-stroke:0.45px #8280a0;">Tasks</div>
<div class="t" style="left:459.25px;top:29.32px;font-size:12.5px;line-height:12.5px;font-weight:400;color:#8280a0;transform:scaleX(1.0096);-webkit-text-stroke:0.45px #8280a0;">Memberships</div>
<div class="t" style="left:564.60px;top:29.32px;font-size:12.5px;line-height:12.5px;font-weight:400;color:#8280a0;transform:scaleX(1.0754);-webkit-text-stroke:0.45px #8280a0;">Automation</div>
<div class="t" style="left:662.40px;top:29.32px;font-size:12.5px;line-height:12.5px;font-weight:400;color:#8280a0;transform:scaleX(1.0275);-webkit-text-stroke:0.45px #8280a0;">Marketing</div>
<div class="t" style="left:748.75px;top:29.32px;font-size:12.5px;line-height:12.5px;font-weight:400;color:#8280a0;transform:scaleX(1.0109);-webkit-text-stroke:0.45px #8280a0;">Quotes</div>
<div class="t" style="left:820.00px;top:29.32px;font-size:12.5px;line-height:12.5px;font-weight:400;color:#8280a0;transform:scaleX(0.9726);-webkit-text-stroke:0.45px #8280a0;">Misc</div>
<div class="t" style="left:875.00px;top:29.32px;font-size:12.5px;line-height:12.5px;font-weight:400;color:#8280a0;transform:scaleX(0.9467);-webkit-text-stroke:0.45px #8280a0;">Files</div>
<div class="t" style="left:257.00px;top:118.53px;font-size:16.5px;line-height:16.5px;font-weight:400;color:#3a3a4e;transform:scaleX(1.0086);">Abigail Jones</div>
<div class="t" style="left:275.00px;top:186.42px;font-size:12.5px;line-height:12.5px;font-weight:400;color:#5f5f77;transform:scaleX(1.0428);-webkit-text-stroke:0.25px #5f5f77;">contact@clinicsoftware.com</div>
<div class="t" style="left:480.50px;top:186.42px;font-size:12.5px;line-height:12.5px;font-weight:400;color:#5f5f77;transform:scaleX(1.0002);-webkit-text-stroke:0.25px #5f5f77;">07490009777</div>
<div class="t" style="left:605.00px;top:186.42px;font-size:12.5px;line-height:12.5px;font-weight:400;color:#5f5f77;transform:scaleX(1.0240);-webkit-text-stroke:0.25px #5f5f77;">Not specified</div>
<div class="t" style="left:723.75px;top:186.42px;font-size:12.5px;line-height:12.5px;font-weight:400;color:#5f5f77;transform:scaleX(1.0139);-webkit-text-stroke:0.25px #5f5f77;">20224</div>
<div class="t" style="left:807.00px;top:186.42px;font-size:12.5px;line-height:12.5px;font-weight:400;color:#5f5f77;transform:scaleX(1.0549);-webkit-text-stroke:0.25px #5f5f77;">14/09/1969</div>
<div class="t" style="left:920.50px;top:186.42px;font-size:12.5px;line-height:12.5px;font-weight:400;color:#5f5f77;transform:scaleX(1.0266);-webkit-text-stroke:0.25px #5f5f77;">Andree Land</div>
<div class="t" style="left:1042.00px;top:186.42px;font-size:12.5px;line-height:12.5px;font-weight:400;color:#5f5f77;transform:scaleX(1.0382);-webkit-text-stroke:0.25px #5f5f77;">Platinum</div>
<div class="t" style="left:1142.50px;top:186.42px;font-size:12.5px;line-height:12.5px;font-weight:400;color:#5f5f77;transform:scaleX(0.8702);-webkit-text-stroke:0.25px #5f5f77;">313211</div>
<div class="t" style="left:1225.60px;top:186.42px;font-size:12.5px;line-height:12.5px;font-weight:400;color:#12a6f3;transform:scaleX(1.0119);-webkit-text-stroke:0.25px #12a6f3;">VAT Exempt Medical: No</div>
<div class="t" style="left:1424.00px;top:186.42px;font-size:12.5px;line-height:12.5px;font-weight:400;color:#12a6f3;transform:scaleX(1.0410);-webkit-text-stroke:0.25px #12a6f3;">Upcoming Meetings</div>
<div class="t" style="left:1044.80px;top:121.56px;font-size:11.5px;line-height:11.5px;font-weight:700;color:#1fa8ee;transform:scaleX(0.9520);">CALL</div>
<div class="t" style="left:1132.00px;top:121.56px;font-size:11.5px;line-height:11.5px;font-weight:700;color:#1fa8ee;transform:scaleX(0.9283);">REPORT REFERRALS BY</div>
<div class="t" style="left:1320.80px;top:121.56px;font-size:11.5px;line-height:11.5px;font-weight:700;color:#1fa8ee;transform:scaleX(0.9640);">AVAILABLE CONSENT FORMS</div>
<div class="t" style="left:1541.70px;top:121.56px;font-size:11.5px;line-height:11.5px;font-weight:700;color:#1fa8ee;transform:scaleX(0.9580);">REJUVENATION PROCEDURES</div>
<div class="t" style="left:1766.70px;top:121.56px;font-size:11.5px;line-height:11.5px;font-weight:700;color:#6158cf;transform:scaleX(0.9102);">SELECT</div>
<div class="t" style="left:300.00px;top:269.94px;font-size:12px;line-height:12px;font-weight:400;color:#3f3f55;transform:scaleX(1.0096);-webkit-text-stroke:0.3px #3f3f55;">Total Invoices</div>
<div class="t" style="left:300.50px;top:288.85px;font-size:14px;line-height:14px;font-weight:700;color:#32324a;transform:scaleX(0.9915);">£ 185231.24</div>
<div class="t" style="left:560.00px;top:269.94px;font-size:12px;line-height:12px;font-weight:400;color:#3f3f55;transform:scaleX(1.0492);-webkit-text-stroke:0.3px #3f3f55;">Total Appointments</div>
<div class="t" style="left:560.50px;top:288.85px;font-size:14px;line-height:14px;font-weight:700;color:#32324a;transform:scaleX(1.1088);">945</div>
<div class="t" style="left:848.50px;top:269.94px;font-size:12px;line-height:12px;font-weight:400;color:#3f3f55;transform:scaleX(1.0116);-webkit-text-stroke:0.3px #3f3f55;">Total Consent Forms</div>
<div class="t" style="left:849.00px;top:288.85px;font-size:14px;line-height:14px;font-weight:700;color:#32324a;transform:scaleX(0.9846);">421</div>
<div class="t" style="left:1142.80px;top:269.94px;font-size:12px;line-height:12px;font-weight:400;color:#3f3f55;transform:scaleX(1.0195);-webkit-text-stroke:0.3px #3f3f55;">Total Procedures</div>
<div class="t" style="left:1143.30px;top:288.85px;font-size:14px;line-height:14px;font-weight:700;color:#32324a;transform:scaleX(0.9730);">£ 183</div>
<div class="t" style="left:1416.60px;top:269.94px;font-size:12px;line-height:12px;font-weight:400;color:#3f3f55;transform:scaleX(0.9879);-webkit-text-stroke:0.3px #3f3f55;">Pending Tasks</div>
<div class="t" style="left:1417.10px;top:288.85px;font-size:14px;line-height:14px;font-weight:700;color:#32324a;transform:scaleX(1.0132);">0</div>
<div class="t" style="left:1676.00px;top:269.94px;font-size:12px;line-height:12px;font-weight:400;color:#3f3f55;transform:scaleX(1.0329);-webkit-text-stroke:0.3px #3f3f55;">Balance</div>
<div class="t" style="left:1676.50px;top:288.42px;font-size:14.5px;line-height:14.5px;font-weight:400;color:#22bfa2;transform:scaleX(0.9955);-webkit-text-stroke:0.5px #22bfa2;">£ 126.00</div>
<div class="t" style="left:178.70px;top:390.19px;font-size:12.3px;line-height:12.3px;font-weight:400;color:#1ea9f4;transform:scaleX(0.9553);-webkit-text-stroke:0.45px #1ea9f4;">Profile</div>
<div class="t" style="left:310.00px;top:390.19px;font-size:12.3px;line-height:12.3px;font-weight:400;color:#1ea9f4;transform:scaleX(0.9608);-webkit-text-stroke:0.45px #1ea9f4;">Courses</div>
<div class="t" style="left:432.70px;top:390.19px;font-size:12.3px;line-height:12.3px;font-weight:400;color:#1ea9f4;transform:scaleX(0.9768);-webkit-text-stroke:0.45px #1ea9f4;">Memberships</div>
<div class="t" style="left:139.70px;top:436.38px;font-size:15.5px;line-height:15.5px;font-weight:400;color:#5b5b6f;transform:scaleX(1.0022);-webkit-text-stroke:0.2px #5b5b6f;">Activity</div>
<div class="t" style="left:139.70px;top:472.28px;font-size:15.5px;line-height:15.5px;font-weight:400;color:#5b5b6f;transform:scaleX(0.9653);-webkit-text-stroke:0.2px #5b5b6f;">Invoices</div>
<div class="t" style="left:139.70px;top:509.38px;font-size:15.5px;line-height:15.5px;font-weight:400;color:#5b5b6f;transform:scaleX(0.9957);-webkit-text-stroke:0.2px #5b5b6f;">Accounts and Billing</div>
<div class="t" style="left:139.70px;top:545.98px;font-size:15.5px;line-height:15.5px;font-weight:400;color:#5b5b6f;transform:scaleX(1.0150);-webkit-text-stroke:0.2px #5b5b6f;">Appointments</div>
<div class="t" style="left:139.70px;top:582.38px;font-size:15.5px;line-height:15.5px;font-weight:400;color:#5b5b6f;transform:scaleX(0.9195);-webkit-text-stroke:0.2px #5b5b6f;">Files</div>
<div class="t" style="left:139.70px;top:618.28px;font-size:15.5px;line-height:15.5px;font-weight:400;color:#5b5b6f;transform:scaleX(1.0086);-webkit-text-stroke:0.2px #5b5b6f;">Balance</div>
<div class="t" style="left:139.70px;top:655.73px;font-size:15.5px;line-height:15.5px;font-weight:400;color:#5b5b6f;transform:scaleX(0.9844);-webkit-text-stroke:0.2px #5b5b6f;">Clinic Notes and Letters</div>
<div class="t" style="left:139.70px;top:691.28px;font-size:15.5px;line-height:15.5px;font-weight:400;color:#5b5b6f;transform:scaleX(0.9828);-webkit-text-stroke:0.2px #5b5b6f;">Audio Notes</div>
<div class="t" style="left:139.70px;top:728.38px;font-size:15.5px;line-height:15.5px;font-weight:400;color:#5b5b6f;transform:scaleX(0.9335);-webkit-text-stroke:0.2px #5b5b6f;">Drinks</div>
<div class="t" style="left:139.70px;top:764.48px;font-size:15.5px;line-height:15.5px;font-weight:400;color:#5b5b6f;transform:scaleX(0.9717);-webkit-text-stroke:0.2px #5b5b6f;">Consent Forms History</div>
<div class="t" style="left:139.70px;top:800.98px;font-size:15.5px;line-height:15.5px;font-weight:400;color:#5b5b6f;transform:scaleX(0.9872);-webkit-text-stroke:0.2px #5b5b6f;">Medical History</div>
<div class="t" style="left:139.70px;top:836.98px;font-size:15.5px;line-height:15.5px;font-weight:400;color:#1da7ef;transform:scaleX(0.9984);-webkit-text-stroke:0.2px #1da7ef;">Body Composition</div>
<div class="t" style="left:139.70px;top:874.28px;font-size:15.5px;line-height:15.5px;font-weight:400;color:#5b5b6f;transform:scaleX(1.0045);-webkit-text-stroke:0.2px #5b5b6f;">Treatment Record</div>
<div class="t" style="left:139.70px;top:909.98px;font-size:15.5px;line-height:15.5px;font-weight:400;color:#5b5b6f;transform:scaleX(1.0012);-webkit-text-stroke:0.2px #5b5b6f;">Recommended Products</div>
<div class="t" style="left:614.00px;top:368.88px;font-size:15.5px;line-height:15.5px;font-weight:400;color:#3d3d50;transform:scaleX(0.9968);-webkit-text-stroke:0.2px #3d3d50;">Body Composition</div>
<div class="t" style="left:1736.60px;top:372.42px;font-size:12.5px;line-height:12.5px;font-weight:400;color:#6b6b80;transform:scaleX(0.9601);">Export</div>
<div class="t" style="left:1814.30px;top:372.42px;font-size:12.5px;line-height:12.5px;font-weight:700;color:#ffffff;transform:scaleX(0.9068);">Add New</div>
<div class="t" style="left:608.90px;top:487.39px;font-size:13px;line-height:13px;font-weight:400;color:#2c2c3e;-webkit-text-stroke:0.25px #2c2c3e;">Rec. Date</div>
<div class="t" style="left:694.40px;top:487.39px;font-size:13px;line-height:13px;font-weight:400;color:#2c2c3e;-webkit-text-stroke:0.25px #2c2c3e;">Date</div>
<div class="t" style="left:779.00px;top:487.39px;font-size:13px;line-height:13px;font-weight:400;color:#2c2c3e;-webkit-text-stroke:0.25px #2c2c3e;">Weight</div>
<div class="t" style="left:838.30px;top:487.39px;font-size:13px;line-height:13px;font-weight:400;color:#2c2c3e;-webkit-text-stroke:0.25px #2c2c3e;">Fat %</div>
<div class="t" style="left:888.00px;top:469.59px;font-size:13px;line-height:13px;font-weight:400;color:#2c2c3e;-webkit-text-stroke:0.25px #2c2c3e;">Water</div>
<div class="t" style="left:888.00px;top:487.39px;font-size:13px;line-height:13px;font-weight:400;color:#2c2c3e;-webkit-text-stroke:0.25px #2c2c3e;">%</div>
<div class="t" style="left:954.00px;top:469.59px;font-size:13px;line-height:13px;font-weight:400;color:#2c2c3e;-webkit-text-stroke:0.25px #2c2c3e;">Bone</div>
<div class="t" style="left:954.00px;top:487.39px;font-size:13px;line-height:13px;font-weight:400;color:#2c2c3e;-webkit-text-stroke:0.25px #2c2c3e;">(Kg)</div>
<div class="t" style="left:1027.00px;top:469.59px;font-size:13px;line-height:13px;font-weight:400;color:#2c2c3e;-webkit-text-stroke:0.25px #2c2c3e;">Muscle</div>
<div class="t" style="left:1027.00px;top:487.39px;font-size:13px;line-height:13px;font-weight:400;color:#2c2c3e;-webkit-text-stroke:0.25px #2c2c3e;">(Kg)</div>
<div class="t" style="left:1110.00px;top:469.59px;font-size:13px;line-height:13px;font-weight:400;color:#2c2c3e;-webkit-text-stroke:0.25px #2c2c3e;">Physique (1-</div>
<div class="t" style="left:1110.00px;top:487.39px;font-size:13px;line-height:13px;font-weight:400;color:#2c2c3e;-webkit-text-stroke:0.25px #2c2c3e;">9)</div>
<div class="t" style="left:1206.20px;top:469.59px;font-size:13px;line-height:13px;font-weight:400;color:#2c2c3e;-webkit-text-stroke:0.25px #2c2c3e;">Visceral Fat (1-</div>
<div class="t" style="left:1206.20px;top:487.39px;font-size:13px;line-height:13px;font-weight:400;color:#2c2c3e;-webkit-text-stroke:0.25px #2c2c3e;">12)</div>
<div class="t" style="left:1322.50px;top:469.59px;font-size:13px;line-height:13px;font-weight:400;color:#2c2c3e;-webkit-text-stroke:0.25px #2c2c3e;">Metabolic</div>
<div class="t" style="left:1322.50px;top:487.39px;font-size:13px;line-height:13px;font-weight:400;color:#2c2c3e;-webkit-text-stroke:0.25px #2c2c3e;">Age</div>
<div class="t" style="left:1423.50px;top:469.59px;font-size:13px;line-height:13px;font-weight:400;color:#2c2c3e;-webkit-text-stroke:0.25px #2c2c3e;">Daily Caloric</div>
<div class="t" style="left:1423.50px;top:487.39px;font-size:13px;line-height:13px;font-weight:400;color:#2c2c3e;-webkit-text-stroke:0.25px #2c2c3e;">Intake</div>
<div class="t" style="left:1550.70px;top:469.59px;font-size:13px;line-height:13px;font-weight:400;color:#2c2c3e;-webkit-text-stroke:0.25px #2c2c3e;">Bowel</div>
<div class="t" style="left:1550.70px;top:487.39px;font-size:13px;line-height:13px;font-weight:400;color:#2c2c3e;-webkit-text-stroke:0.25px #2c2c3e;">movements</div>
<div class="t" style="left:1672.80px;top:487.39px;font-size:13px;line-height:13px;font-weight:400;color:#2c2c3e;-webkit-text-stroke:0.25px #2c2c3e;">Options</div>
<div class="t" style="left:608.40px;top:526.89px;font-size:13px;line-height:13px;font-weight:400;color:#2c2c3e;-webkit-text-stroke:0.25px #2c2c3e;">21/12/2020</div>
<div class="t" style="left:693.90px;top:526.89px;font-size:13px;line-height:13px;font-weight:400;color:#2c2c3e;-webkit-text-stroke:0.25px #2c2c3e;">434</div>
<div class="t" style="left:778.50px;top:526.89px;font-size:13px;line-height:13px;font-weight:400;color:#2c2c3e;-webkit-text-stroke:0.25px #2c2c3e;">434</div>
<div class="t" style="left:837.80px;top:526.89px;font-size:13px;line-height:13px;font-weight:400;color:#2c2c3e;-webkit-text-stroke:0.25px #2c2c3e;">434</div>
<div class="t" style="left:887.50px;top:526.89px;font-size:13px;line-height:13px;font-weight:400;color:#2c2c3e;-webkit-text-stroke:0.25px #2c2c3e;">434</div>
<div class="t" style="left:953.50px;top:526.89px;font-size:13px;line-height:13px;font-weight:400;color:#2c2c3e;-webkit-text-stroke:0.25px #2c2c3e;">434</div>
<div class="t" style="left:1026.50px;top:526.89px;font-size:13px;line-height:13px;font-weight:400;color:#2c2c3e;-webkit-text-stroke:0.25px #2c2c3e;">434</div>
<div class="t" style="left:1109.50px;top:526.89px;font-size:13px;line-height:13px;font-weight:400;color:#2c2c3e;-webkit-text-stroke:0.25px #2c2c3e;">434</div>
<div class="t" style="left:1205.70px;top:526.89px;font-size:13px;line-height:13px;font-weight:400;color:#2c2c3e;-webkit-text-stroke:0.25px #2c2c3e;">434</div>
<div class="t" style="left:1322.00px;top:526.89px;font-size:13px;line-height:13px;font-weight:400;color:#2c2c3e;-webkit-text-stroke:0.25px #2c2c3e;">434</div>
<div class="t" style="left:1423.00px;top:526.89px;font-size:13px;line-height:13px;font-weight:400;color:#2c2c3e;-webkit-text-stroke:0.25px #2c2c3e;">2320</div>
<div class="t" style="left:608.40px;top:579.39px;font-size:13px;line-height:13px;font-weight:400;color:#2c2c3e;-webkit-text-stroke:0.25px #2c2c3e;">27/11/2019</div>
<div class="t" style="left:693.90px;top:579.39px;font-size:13px;line-height:13px;font-weight:400;color:#2c2c3e;-webkit-text-stroke:0.25px #2c2c3e;">27/11/2019</div>
<div class="t" style="left:778.50px;top:579.39px;font-size:13px;line-height:13px;font-weight:400;color:#2c2c3e;-webkit-text-stroke:0.25px #2c2c3e;">55</div>
<div class="t" style="left:837.80px;top:579.39px;font-size:13px;line-height:13px;font-weight:400;color:#2c2c3e;-webkit-text-stroke:0.25px #2c2c3e;">24.50</div>
<div class="t" style="left:887.50px;top:579.39px;font-size:13px;line-height:13px;font-weight:400;color:#2c2c3e;-webkit-text-stroke:0.25px #2c2c3e;">52.28</div>
<div class="t" style="left:953.50px;top:579.39px;font-size:13px;line-height:13px;font-weight:400;color:#2c2c3e;-webkit-text-stroke:0.25px #2c2c3e;">2.12</div>
<div class="t" style="left:1026.50px;top:579.39px;font-size:13px;line-height:13px;font-weight:400;color:#2c2c3e;-webkit-text-stroke:0.25px #2c2c3e;">39.41</div>
<div class="t" style="left:1109.50px;top:579.39px;font-size:13px;line-height:13px;font-weight:400;color:#2c2c3e;-webkit-text-stroke:0.25px #2c2c3e;">5</div>
<div class="t" style="left:1205.70px;top:579.39px;font-size:13px;line-height:13px;font-weight:400;color:#2c2c3e;-webkit-text-stroke:0.25px #2c2c3e;">1.99</div>
<div class="t" style="left:1322.00px;top:579.39px;font-size:13px;line-height:13px;font-weight:400;color:#2c2c3e;-webkit-text-stroke:0.25px #2c2c3e;">19</div>
<div class="t" style="left:1423.00px;top:579.39px;font-size:13px;line-height:13px;font-weight:400;color:#2c2c3e;-webkit-text-stroke:0.25px #2c2c3e;">2058</div>
<div class="t" style="left:608.40px;top:633.59px;font-size:13px;line-height:13px;font-weight:400;color:#2c2c3e;-webkit-text-stroke:0.25px #2c2c3e;">27/06/2019</div>
<div class="t" style="left:693.90px;top:633.59px;font-size:13px;line-height:13px;font-weight:400;color:#2c2c3e;-webkit-text-stroke:0.25px #2c2c3e;">27/06/2019</div>
<div class="t" style="left:778.50px;top:633.59px;font-size:13px;line-height:13px;font-weight:400;color:#2c2c3e;-webkit-text-stroke:0.25px #2c2c3e;">80</div>
<div class="t" style="left:837.80px;top:633.59px;font-size:13px;line-height:13px;font-weight:400;color:#2c2c3e;-webkit-text-stroke:0.25px #2c2c3e;">16%</div>
<div class="t" style="left:887.50px;top:633.59px;font-size:13px;line-height:13px;font-weight:400;color:#2c2c3e;-webkit-text-stroke:0.25px #2c2c3e;">67%</div>
<div class="t" style="left:953.50px;top:633.59px;font-size:13px;line-height:13px;font-weight:400;color:#2c2c3e;-webkit-text-stroke:0.25px #2c2c3e;">40</div>
<div class="t" style="left:1026.50px;top:633.59px;font-size:13px;line-height:13px;font-weight:400;color:#2c2c3e;-webkit-text-stroke:0.25px #2c2c3e;">40</div>
<div class="t" style="left:1109.50px;top:633.59px;font-size:13px;line-height:13px;font-weight:400;color:#2c2c3e;-webkit-text-stroke:0.25px #2c2c3e;">2</div>
<div class="t" style="left:1205.70px;top:633.59px;font-size:13px;line-height:13px;font-weight:400;color:#2c2c3e;-webkit-text-stroke:0.25px #2c2c3e;">2</div>
<div class="t" style="left:1322.00px;top:633.59px;font-size:13px;line-height:13px;font-weight:400;color:#2c2c3e;-webkit-text-stroke:0.25px #2c2c3e;">42</div>
<div class="t" style="left:1423.00px;top:633.59px;font-size:13px;line-height:13px;font-weight:400;color:#2c2c3e;-webkit-text-stroke:0.25px #2c2c3e;">3500</div>
<div class="t" style="left:608.40px;top:687.69px;font-size:13px;line-height:13px;font-weight:400;color:#2c2c3e;-webkit-text-stroke:0.25px #2c2c3e;">27/06/2019</div>
<div class="t" style="left:693.90px;top:687.69px;font-size:13px;line-height:13px;font-weight:400;color:#2c2c3e;-webkit-text-stroke:0.25px #2c2c3e;">27/06/2019</div>
<div class="t" style="left:778.50px;top:687.69px;font-size:13px;line-height:13px;font-weight:400;color:#2c2c3e;-webkit-text-stroke:0.25px #2c2c3e;">75</div>
<div class="t" style="left:837.80px;top:687.69px;font-size:13px;line-height:13px;font-weight:400;color:#2c2c3e;-webkit-text-stroke:0.25px #2c2c3e;">15%</div>
<div class="t" style="left:887.50px;top:687.69px;font-size:13px;line-height:13px;font-weight:400;color:#2c2c3e;-webkit-text-stroke:0.25px #2c2c3e;">45%</div>
<div class="t" style="left:953.50px;top:687.69px;font-size:13px;line-height:13px;font-weight:400;color:#2c2c3e;-webkit-text-stroke:0.25px #2c2c3e;">32</div>
<div class="t" style="left:1026.50px;top:687.69px;font-size:13px;line-height:13px;font-weight:400;color:#2c2c3e;-webkit-text-stroke:0.25px #2c2c3e;">43</div>
<div class="t" style="left:1109.50px;top:687.69px;font-size:13px;line-height:13px;font-weight:400;color:#2c2c3e;-webkit-text-stroke:0.25px #2c2c3e;">8</div>
<div class="t" style="left:1205.70px;top:687.69px;font-size:13px;line-height:13px;font-weight:400;color:#2c2c3e;-webkit-text-stroke:0.25px #2c2c3e;">1</div>
<div class="t" style="left:1322.00px;top:687.69px;font-size:13px;line-height:13px;font-weight:400;color:#2c2c3e;-webkit-text-stroke:0.25px #2c2c3e;">41</div>
<div class="t" style="left:1423.00px;top:687.69px;font-size:13px;line-height:13px;font-weight:400;color:#2c2c3e;-webkit-text-stroke:0.25px #2c2c3e;">2500</div>
<div class="t" style="left:1706.60px;top:536.31px;font-size:11.5px;line-height:11.5px;font-weight:700;color:#fff;transform:scaleX(0.8926);">Edit</div>
<div class="t" style="left:1792.80px;top:536.31px;font-size:11.5px;line-height:11.5px;font-weight:700;color:#fff;transform:scaleX(1.0194);">Delete</div>
<div class="t" style="left:1706.60px;top:590.56px;font-size:11.5px;line-height:11.5px;font-weight:700;color:#fff;transform:scaleX(0.8926);">Edit</div>
<div class="t" style="left:1792.80px;top:590.56px;font-size:11.5px;line-height:11.5px;font-weight:700;color:#fff;transform:scaleX(1.0194);">Delete</div>
<div class="t" style="left:1706.60px;top:643.56px;font-size:11.5px;line-height:11.5px;font-weight:700;color:#fff;transform:scaleX(0.8926);">Edit</div>
<div class="t" style="left:1792.80px;top:643.56px;font-size:11.5px;line-height:11.5px;font-weight:700;color:#fff;transform:scaleX(1.0194);">Delete</div>
<div class="t" style="left:1706.60px;top:697.96px;font-size:11.5px;line-height:11.5px;font-weight:700;color:#fff;transform:scaleX(0.8926);">Edit</div>
<div class="t" style="left:1792.80px;top:697.96px;font-size:11.5px;line-height:11.5px;font-weight:700;color:#fff;transform:scaleX(1.0194);">Delete</div>

<!-- cursor -->
<svg class="a" style="left:1107px;top:457px" width="15" height="21" viewBox="0 0 15 21"><path d="M1.4 1.3 L1.4 17.3 L5.3 13.9 L8 19.6 L10.4 18.6 L7.8 13.1 L12.8 12.8 Z" fill="#fff" stroke="#1a1a1a" stroke-width="1" stroke-linejoin="round"/></svg>

<!-- right widgets -->
<div class="wg" style="top:284px;"><div class="wgi"></div>
<svg class="a" style="left:12px;top:14px" width="17" height="16" viewBox="0 0 17 16"><path d="M0.8 3 L3.3 3 L5 10.3 L13.8 10.3 L15.6 3.6 L4 3.6" fill="none" stroke="#f5a300" stroke-width="1.5"/><path d="M13.8 3.6 L15.2 0.8 L16.8 0.8" fill="none" stroke="#f5a300" stroke-width="1.3"/><circle cx="6.3" cy="13.3" r="1.6" fill="none" stroke="#f5a300" stroke-width="1.3"/><circle cx="11.8" cy="13.3" r="1.6" fill="none" stroke="#f5a300" stroke-width="1.3"/><path d="M7.9 13.3 L10.2 13.3" stroke="#f5a300" stroke-width="1.1"/></svg></div>
<div class="wg" style="top:342px;"><div class="wgi"></div>
<svg class="a" style="left:13px;top:15px" width="16" height="16" viewBox="0 0 16 16"><circle cx="8" cy="8" r="7.7" fill="#1fbfa5"/><path d="M5.2 3.5 Q3.6 4.6 4.1 7.2 Q5 10.6 8.6 11.6 Q10.8 12 11.9 10.4 L10.2 8.8 L8.9 9.5 Q6.5 8.4 5.9 6.5 L6.8 5.2 Z" fill="#fff"/></svg></div>
<div class="wg" style="top:401px;"><div class="wgi"></div>
<svg class="a" style="left:7px;top:9px" width="28" height="28" viewBox="0 0 28 28"><defs><linearGradient id="ai" x1="0" y1="0" x2="1" y2="0"><stop offset="0" stop-color="#2ab8ff"/><stop offset="0.5" stop-color="#3aa6f8"/><stop offset="0.5" stop-color="#ffb13b"/><stop offset="1" stop-color="#ff7a2a"/></linearGradient><linearGradient id="aitop" x1="0" y1="0" x2="0" y2="1"><stop offset="0" stop-color="#ffe36a" stop-opacity="0.8"/><stop offset="0.45" stop-color="#ffe36a" stop-opacity="0"/></linearGradient><linearGradient id="aib" x1="0" y1="0" x2="1" y2="1"><stop offset="0" stop-color="#9a5ce0"/><stop offset="1" stop-color="#5a4fd0"/></linearGradient></defs><path d="M14 1.5 Q17.5 0.5 19 3.5 Q22.5 2.5 23.8 6 Q27.5 7.5 26 11.5 Q28.5 15 25.5 18 Q25.8 22.5 21.5 23 Q19.5 27 15.5 26 Q14 27.5 12.5 26 Q8.5 27 6.5 23 Q2.2 22.5 2.5 18 Q-0.5 15 2 11.5 Q0.5 7.5 4.2 6 Q5.5 2.5 9 3.5 Q10.5 0.5 14 1.5 Z" fill="url(#ai)"/><path d="M14 1.5 Q17.5 0.5 19 3.5 Q22.5 2.5 23.8 6 Q27.5 7.5 26 11.5 L2 11.5 Q0.5 7.5 4.2 6 Q5.5 2.5 9 3.5 Q10.5 0.5 14 1.5 Z" fill="url(#aitop)"/><circle cx="14" cy="14.2" r="6.3" fill="url(#aib)"/><text x="14" y="17.2" font-family="Liberation Sans" font-size="7.5" font-weight="bold" fill="#fff" text-anchor="middle">AI</text></svg></div>

<div id="sb"></div><div id="sbt"></div>
</body></html>
